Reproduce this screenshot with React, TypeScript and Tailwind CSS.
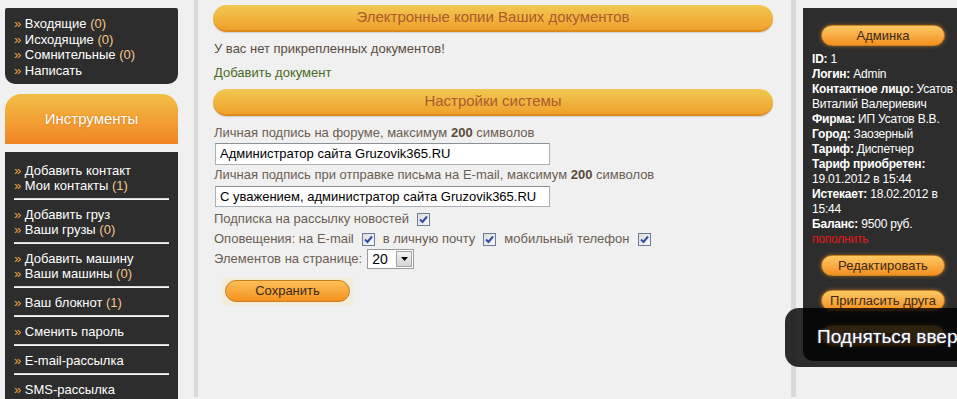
import React from "react"

const font = { fontFamily: '"Liberation Sans", Arial, sans-serif' }

function Check() {
  return (
    <span className="inline-flex items-center justify-center w-[13px] h-[13px] border border-[#6a7c98] bg-gradient-to-br from-[#dcdcdc] to-[#fafafa] align-middle">
      <svg width="9" height="9" viewBox="0 0 9 9">
        <path d="M1 4.5 L3.5 7 L8 1.5" stroke="#2f4fa8" strokeWidth="2" fill="none" />
      </svg>
    </span>
  )
}

function MenuLine({ text, count, leading = "leading-[15px]" }: { text: string; count?: string; leading?: string }) {
  return (
    <div className={`${leading} whitespace-nowrap`}>
      <span className="text-[#f0a43a]">»</span> <span className="text-white">{text}</span>
      {count && <span className="text-[#f3c78a]"> {count}</span>}
    </div>
  )
}

function OrangeButton({ label, className = "" }: { label: string; className?: string }) {
  return (
    <div
      className={`h-[21px] w-[124px] rounded-full border border-[#c9801f] bg-gradient-to-b from-[#fcc862] to-[#f2901c] shadow-[0_0_4px_rgba(240,150,40,0.55)] flex items-center justify-center text-[13px] text-[#3b2a18] tracking-normal ${className}`}
    >
      {label}
    </div>
  )
}

function Header({ title }: { title: string }) {
  return (
    <div className="h-[27px] rounded-full bg-gradient-to-b from-[#f1c850] to-[#efa12c] border-b-2 border-[#de8a1f] shadow-[0_1px_1px_rgba(0,0,0,0.15)] flex items-center justify-center text-[15px] text-[#ad5a2e]">
      {title}
    </div>
  )
}

export default function App() {
  const groups = [
    [
      { text: "Добавить контакт" },
      { text: "Мои контакты", count: "(1)" },
    ],
    [
      { text: "Добавить груз" },
      { text: "Ваши грузы", count: "(0)" },
    ],
    [
      { text: "Добавить машину" },
      { text: "Ваши машины", count: "(0)" },
    ],
    [{ text: "Ваш блокнот", count: "(1)" }],
    [{ text: "Сменить пароль" }],
    [{ text: "E-mail-рассылка" }],
    [{ text: "SMS-рассылка" }],
  ]

  return (
    <div className="relative w-[957px] h-[399px] overflow-hidden bg-[#f0f0f0] flex text-[13px]" style={font}>
      {/* left column */}
      <div className="ml-[5px] w-[173px] h-[399px] shrink-0 overflow-hidden">
        <div className="mt-[8px] bg-[#2d2d2d] rounded-b-[10px] rounded-t-[2px] pl-[9px] pt-[8px] pb-[6px]">
          {[
            { text: "Входящие", count: "(0)" },
            { text: "Исходящие", count: "(0)" },
            { text: "Сомнительные", count: "(0)" },
            { text: "Написать" },
          ].map((i) => (
            <MenuLine key={i.text} text={i.text} count={i.count} leading="leading-[15.5px]" />
          ))}
        </div>
        <div className="mt-[10px] h-[50px] rounded-t-[16px] bg-gradient-to-b from-[#f1bf45] to-[#f08424] flex items-center justify-center text-[15px] text-white [text-shadow:0_0_2px_rgba(180,80,20,0.5)]">
          Инструменты
        </div>
        <div className="mt-[8px] h-[260px] bg-[#2d2d2d] pl-[9px] pr-[9px] pt-[11px]">
          {groups.map((g, gi) => (
            <div key={gi}>
              {g.map((i) => (
                <MenuLine key={i.text} text={i.text} count={i.count} />
              ))}
              {gi < groups.length - 1 && (
                <div className="mt-[5px] mb-[7px] h-[2px] bg-[#d8d8d8] border-b border-[#f5f5f5]" />
              )}
            </div>
          ))}
        </div>
      </div>

      {/* left stripe */}
      <div className="ml-[16px] w-[4px] h-[397px] shrink-0 bg-[#dadada]" />

      {/* center */}
      <div className="w-[593px] shrink-0 pl-[15px] pr-[18px]">
        <div className="mt-[5px]">
          <Header title="Электронные копии Ваших документов" />
        </div>
        <p className="mt-[9px] leading-[16px] text-[#5a4c40] pl-[1px]">У вас нет прикрепленных документов!</p>
        <p className="mt-[8px] leading-[16px] text-[#4a6a1e] pl-[1px]">Добавить документ</p>
        <div className="mt-[8px]">
          <Header title="Настройки системы" />
        </div>
        <p className="mt-[9px] leading-[16px] text-[#6b5e52] pl-[1px]">
          Личная подпись на форуме, максимум <b className="text-[#5a4a3a]">200</b> символов
        </p>
        <div className="mt-[2px] ml-[2px] w-[335px] h-[22px] bg-white border border-[#a9b0b6] border-t-[#8a9096] flex items-center pl-[4px] text-black">
          Администратор сайта Gruzovik365.RU
        </div>
        <p className="mt-[2px] leading-[16px] text-[#6b5e52] pl-[1px]">
          Личная подпись при отправке письма на E-mail, максимум <b className="text-[#5a4a3a]">200</b> символов
        </p>
        <div className="mt-[3px] ml-[2px] w-[335px] h-[21px] bg-white border border-[#a9b0b6] border-t-[#8a9096] flex items-center pl-[4px] text-black">
          С уважением, администратор сайта Gruzovik365.RU
        </div>
        <div className="mt-[4px] h-[16px] flex items-center gap-[8px] text-[#6b5e52] pl-[1px]">
          <span>Подписка на рассылку новостей</span>
          <Check />
        </div>
        <div className="mt-[4px] h-[16px] flex items-center text-[#6b5e52] pl-[1px]">
          <span>Оповещения: на E-mail</span>
          <span className="ml-[8px] flex"><Check /></span>
          <span className="ml-[8px]">в личную почту</span>
          <span className="ml-[8px] flex"><Check /></span>
          <span className="ml-[8px]">мобильный телефон</span>
          <span className="ml-[9px] flex"><Check /></span>
        </div>
        <div className="mt-[2px] h-[20px] flex items-center text-[#6b5e52] pl-[1px]">
          <span>Элементов на странице:</span>
          <div className="ml-[5px] w-[47px] h-[20px] bg-white border border-[#9a9a9a] flex items-center justify-between text-black text-[14px]">
            <span className="pl-[4px]">20</span>
            <span className="mr-[1px] w-[16px] h-[16px] bg-gradient-to-b from-[#f4f4f4] to-[#d4d4d4] border border-[#9aa2aa] flex items-center justify-center">
              <svg width="7" height="4" viewBox="0 0 7 4">
                <path d="M0 0 H7 L3.5 4 Z" fill="#000" />
              </svg>
            </span>
          </div>
        </div>
        <div className="mt-[8px] ml-[9px] inline-block bg-[#f4ecda] p-[3px]">
          <div className="h-[22px] w-[125px] rounded-full border border-[#c9801f] bg-gradient-to-b from-[#fbbf55] to-[#f3921c] flex items-center justify-center text-[13px] text-[#3b2a18]">
            Сохранить
          </div>
        </div>
      </div>

      {/* right stripe */}
      <div className="w-[5px] h-[397px] shrink-0 bg-[#dadada]" />

      {/* right panel */}
      <div className="ml-[7px] mt-[8px] w-[170px] h-[353px] shrink-0 bg-[#2d2d2d] rounded-bl-[10px] pl-[9px] pt-[17px] text-[12px] text-white">
        <OrangeButton label="Админка" className="ml-[9px]" />
        <div className="mt-[6px] leading-[15px] tracking-[-0.2px]">
          <div><b>ID:</b> 1</div>
          <div><b>Логин:</b> Admin</div>
          <div><b>Контактное лицо:</b> Усатов</div>
          <div>Виталий Валериевич</div>
          <div><b>Фирма:</b> ИП Усатов В.В.</div>
          <div><b>Город:</b> Заозерный</div>
          <div><b>Тариф:</b> Диспетчер</div>
          <div><b>Тариф приобретен:</b></div>
          <div>19.01.2012 в 15:44</div>
          <div><b>Истекает:</b> 18.02.2012 в</div>
          <div>15:44</div>
          <div><b>Баланс:</b> 9500 руб.</div>
          <div className="text-[#e01a1a]">пополнить</div>
        </div>
        <OrangeButton label="Редактировать" className="ml-[9px] mt-[8px]" />
        <OrangeButton label="Пригласить друга" className="ml-[9px] mt-[14px]" />
        <OrangeButton label="Выход" className="ml-[9px] mt-[14px]" />
      </div>

      {/* scroll-to-top overlay */}
      <div className="absolute left-[785px] top-[308px] w-[200px] h-[59px] rounded-l-[14px] bg-black/[0.82] flex items-center pl-[32px] text-[19px] text-white [text-shadow:0_0_2px_rgba(120,160,255,0.6)] whitespace-nowrap">
        Подняться вверх
      </div>
    </div>
  )
}
